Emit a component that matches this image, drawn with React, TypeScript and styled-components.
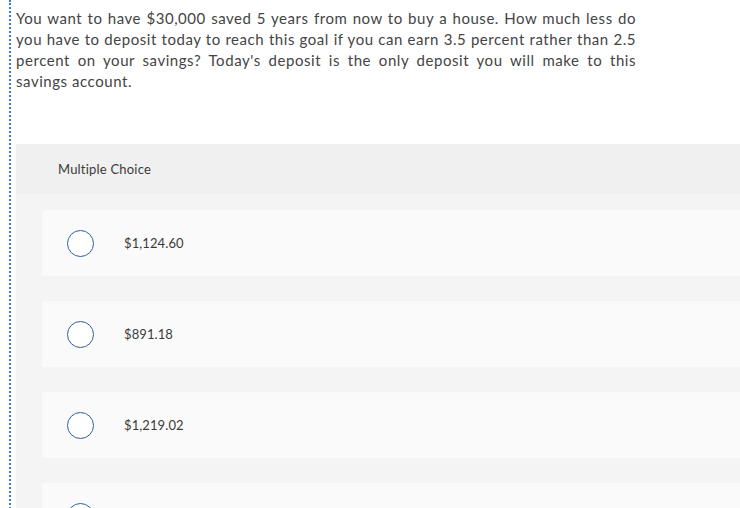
import React from 'react';
import styled, { createGlobalStyle } from 'styled-components';

const GlobalStyle = createGlobalStyle`
  html, body {
    margin: 0;
    padding: 0;
    background: #fff;
    overflow: hidden;
  }
  body {
    font-family: Lato, "Open Sans", Arial, sans-serif;
  }
`;

const Page = styled.div`
  margin-left: 9px;
  padding-left: 5px;
  border-left: 2px dotted #3a7bd5;
  min-height: 508px;
  width: 900px;
`;

const Question = styled.p`
  margin: 0;
  padding-top: 8px;
  width: 620px;
  font-size: 15px;
  line-height: 21px;
  letter-spacing: 0.55px;
  color: #444;
  text-align: justify;
`;

const Section = styled.div`
  margin-top: 52px;
`;

const Header = styled.div`
  height: 50px;
  display: flex;
  align-items: center;
  padding-left: 42px;
  background: #f0f0f0;
  font-size: 13px;
  letter-spacing: 0.2px;
  color: #3a3a3a;
`;

const Choices = styled.div`
  display: flex;
  flex-direction: column;
  gap: 25px;
  padding: 16px 0 20px 26px;
  background: #f4f4f4;
`;

const Choice = styled.label`
  display: flex;
  align-items: center;
  gap: 30px;
  height: 66px;
  padding-left: 25px;
  background: #fafafa;
  border-radius: 3px;
  font-size: 13px;
  letter-spacing: 0.1px;
  color: #3a3a3a;
  cursor: pointer;
`;

const Radio = styled.span`
  width: 25px;
  height: 25px;
  border-radius: 50%;
  border: 1.5px solid #2d5f9e;
  background: #fff;
  flex-shrink: 0;
`;

const options = ['$1,124.60', '$891.18', '$1,219.02', '$1,002.44'];

const App: React.FC = () => {
  return (
    <Page>
      <GlobalStyle />
      <Question>
        You want to have $30,000 saved 5 years from now to buy a house. How much less do you have to
        deposit today to reach this goal if you can earn 3.5 percent rather than 2.5 percent on your
        savings? Today's deposit is the only deposit you will make to this savings account.
      </Question>
      <Section>
        <Header>Multiple Choice</Header>
        <Choices>
          {options.map((o) => (
            <Choice key={o}>
              <Radio />
              {o}
            </Choice>
          ))}
        </Choices>
      </Section>
    </Page>
  );
};

export default App;
